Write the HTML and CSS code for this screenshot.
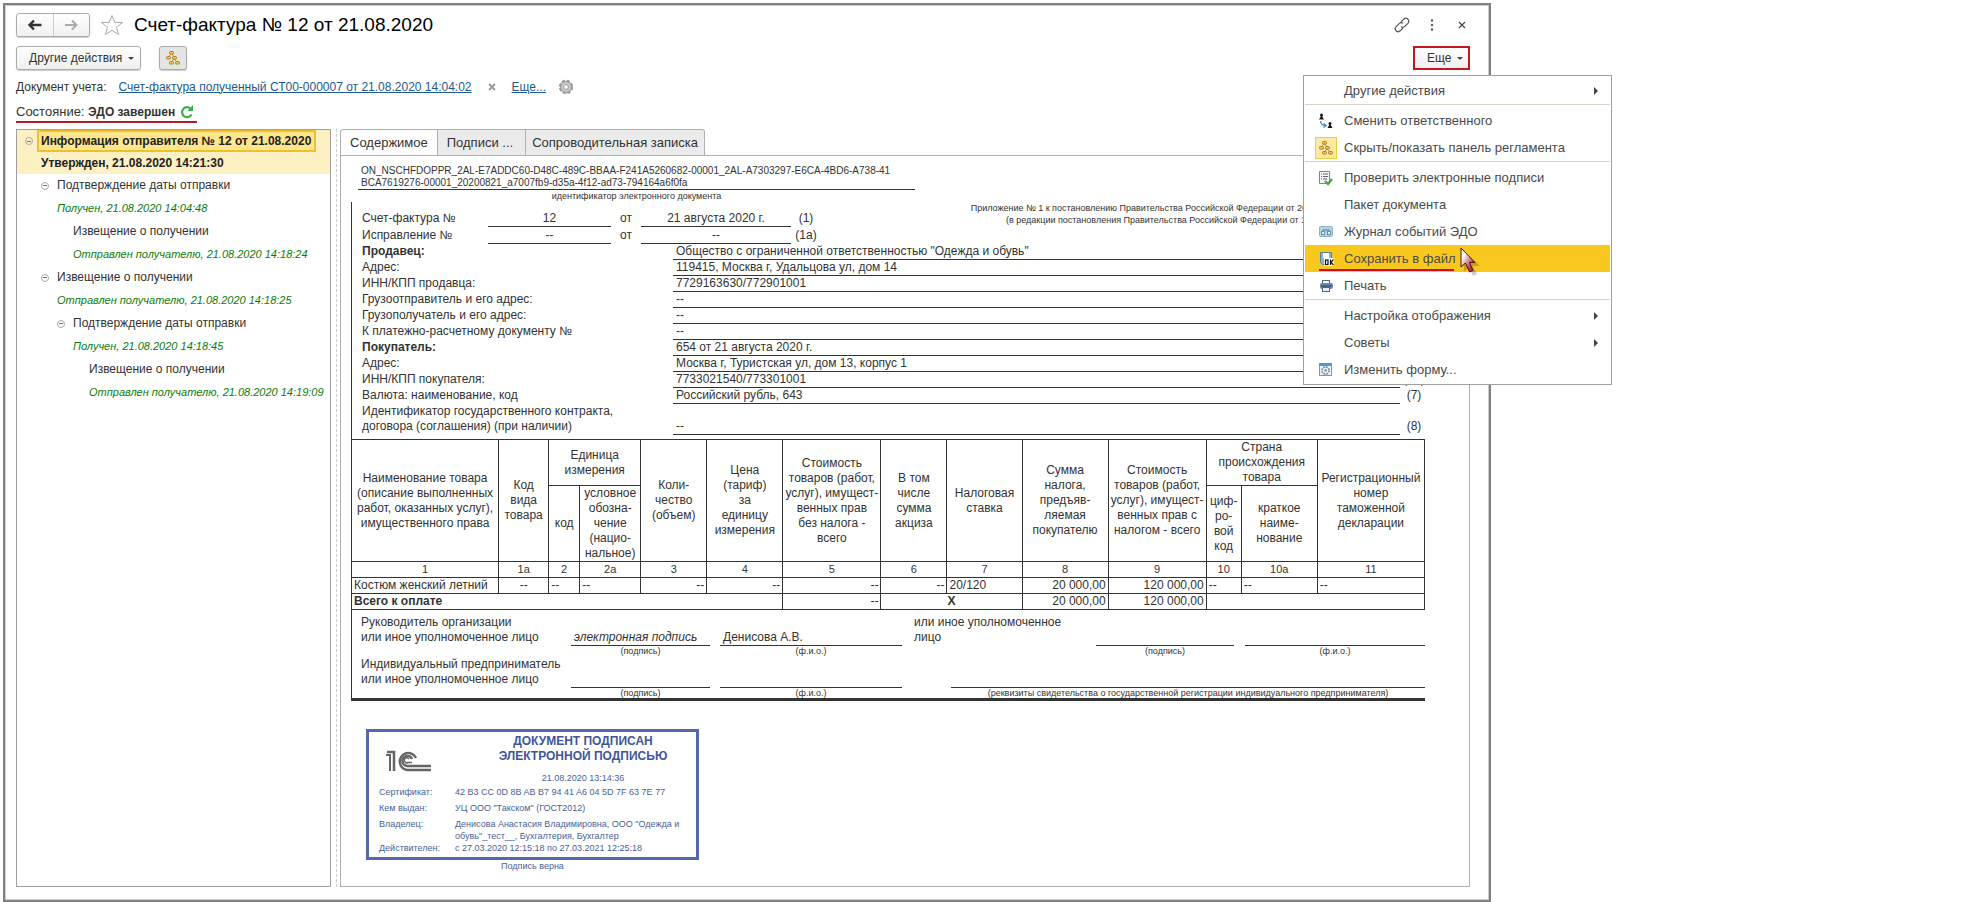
FILE: index.html
```html
<!DOCTYPE html>
<html lang="ru">
<head>
<meta charset="utf-8">
<title>Счет-фактура № 12 от 21.08.2020</title>
<link rel="stylesheet" href="styles.css">
</head>
<body>
<svg class="defs" aria-hidden="true">
  <symbol id="i-tree" viewBox="0 0 16 16">
    <path d="M6 4 L3 7 M7 4 L9 7 M9 9 L6 12 M9 9 L12 12" stroke="#b98a3c" fill="none"/>
    <g fill="#f8c860" stroke="#b07a1c"><rect x="4.500" y="1.500" width="4" height="2.500" rx="1"/><rect x="1.500" y="6.500" width="4" height="2.500" rx="1"/><rect x="7.500" y="6.500" width="4" height="2.500" rx="1"/><rect x="4.500" y="11.500" width="4" height="2.500" rx="1"/><rect x="10.500" y="11.500" width="4" height="2.500" rx="1"/></g>
  </symbol>
</svg>
<main class="page">
<section class="window">
  <header class="titlebar">
    <div class="nav">
      <button type="button" aria-label="Назад"><svg width="14" height="12" viewBox="0 0 14 12"><path d="M6 1.500 L1.500 6 L6 10.500 M2 6 H13.500" fill="none" stroke="#333" stroke-width="2.400"/></svg></button>
      <button type="button" aria-label="Вперед"><svg width="14" height="12" viewBox="0 0 14 12"><path d="M8 1.500 L12.500 6 L8 10.500 M12 6 H1" fill="none" stroke="#aaa" stroke-width="2"/></svg></button>
    </div>
    <svg class="star" width="24" height="22" viewBox="0 0 24 22"><path d="M12 1.500 L14.700 8.300 L22.500 8.600 L16.400 13.300 L18.600 20.500 L12 16.300 L5.400 20.500 L7.600 13.300 L1.500 8.600 L9.300 8.300 Z" fill="#fff" stroke="#aaa"/></svg>
    <h1>Счет-фактура № 12 от 21.08.2020</h1>
    <div class="window-tools">
      <button type="button" aria-label="Ссылка"><svg width="16" height="16" viewBox="0 0 16 16" fill="none" stroke="#555" stroke-width="1.200"><path d="M7 5 L9.800 2.200 A2.900 2.900 0 0 1 13.900 6.300 L10.800 9.400 A2.900 2.900 0 0 1 7 9.600"/><path d="M9 11 L6.200 13.800 A2.900 2.900 0 0 1 2.100 9.700 L5.200 6.600 A2.900 2.900 0 0 1 9 6.400"/></svg></button>
      <button type="button" aria-label="Меню"><svg width="4" height="12" viewBox="0 0 4 12" fill="#555"><circle cx="2" cy="1.500" r="1.200"/><circle cx="2" cy="6" r="1.200"/><circle cx="2" cy="10.500" r="1.200"/></svg></button>
      <button type="button" aria-label="Закрыть"><svg width="8" height="8" viewBox="0 0 8 8"><path d="M1 1 L7 7 M7 1 L1 7" stroke="#444" stroke-width="1.200"/></svg></button>
    </div>
  </header>

  <div class="toolbar">
    <button type="button" class="btn">Другие действия <i class="caret"></i></button>
    <button type="button" class="btn btn-icon" aria-label="Панель регламента"><svg width="16" height="16"><use href="#i-tree"/></svg></button>
    <div class="more">
      <button type="button" class="btn btn-more">Еще <i class="caret"></i></button>
      <ul class="menu" role="menu">
        <li><button type="button"><span></span>Другие действия<i class="sub"></i></button></li>
        <li class="sep"><button type="button"><span><svg width="16" height="16" viewBox="0 0 16 16"><g fill="#181818"><circle cx="3.500" cy="2" r="1.500"/><path d="M1 6.500 L3 3 H4 L6 6.500 Z"/><circle cx="12" cy="10.500" r="1.500"/><path d="M9.500 15 L11.500 11.500 H12.500 L14.500 15 Z"/></g><path d="M2.500 8 C3 11.500 4 12.500 7.500 12.500 M5.500 10.500 L8 12.500 L5.500 14.500" fill="none" stroke="#4a90c4" stroke-width="1.500"/></svg></span>Сменить ответственного</button></li>
        <li><button type="button"><span class="checked"><svg width="16" height="16"><use href="#i-tree"/></svg></span>Скрыть/показать панель регламента</button></li>
        <li class="sep"><button type="button"><span><svg width="16" height="16" viewBox="0 0 16 16"><path d="M1.500 1.500 H11.500 V13.500 H1.500 Z" fill="#f4f8fa" stroke="#71899a"/><path d="M3 4 H4 M5 4 H10 M3 6.500 H4 M5 6.500 H10 M3 9 H4 M5 9 H9" stroke="#667"/><path d="M7 11 L10 14 L14 9" fill="none" stroke="#4fa545" stroke-width="2.400"/></svg></span>Проверить электронные подписи</button></li>
        <li><button type="button"><span></span>Пакет документа</button></li>
        <li><button type="button"><span><svg width="16" height="16" viewBox="0 0 16 16"><rect x="1.500" y="2.500" width="13" height="10" rx="1" fill="#b4d3e6" stroke="#8fb0c6"/><path d="M5 6 H11 M5.500 5.500 L4 8 M10.500 5.500 L12 8" stroke="#557f9d" fill="none"/><rect x="3.500" y="7.500" width="3" height="3" fill="#e8f2f8" stroke="#6b93af"/><rect x="9.500" y="7.500" width="3" height="3" fill="#e8f2f8" stroke="#6b93af"/></svg></span>Журнал событий ЭДО</button></li>
        <li class="current"><button type="button"><span><svg width="16" height="16" viewBox="0 0 16 16"><path d="M2.500 1.500 H13.500 V13.500 H4.500 L2.500 11.500 Z" fill="#8fb4d0" stroke="#557f9d"/><rect x="5" y="2" width="6" height="5" fill="#fff"/><rect x="6" y="7" width="10" height="8" fill="#fff"/><rect x="7.500" y="9" width="2.500" height="4.500" fill="none" stroke="#111" stroke-width="1.200"/><path d="M12.500 8.500 V14 M15.500 8.500 L13 11.200 L15.500 14" fill="none" stroke="#111" stroke-width="1.200"/></svg></span><u>Сохранить в файл</u></button>
          <svg class="cursor" width="22" height="32" viewBox="0 0 22 32"><defs><linearGradient id="cur" x1="0" y1="0" x2="1" y2="1"><stop offset=".25" stop-color="#fff"/><stop offset=".75" stop-color="#b83038"/></linearGradient></defs><path d="M4 5 V25 L9 20 L13 29 L17 27 L13 19 H20 Z" fill="#000" opacity=".2"/><path d="M1 1 V20 L5.500 16 L9.500 25 L13 23.500 L9.500 15.500 H15 Z" fill="url(#cur)" stroke="#4a1418"/></svg></li>
        <li><button type="button"><span><svg width="16" height="16" viewBox="0 0 16 16"><rect x="4.500" y="2.500" width="7" height="4" fill="#fff" stroke="#4c6b86"/><rect x="2" y="5" width="13" height="6" rx="2" fill="#6a8ba8"/><path d="M3 8 H14" stroke="#263f55"/><rect x="4.500" y="9.500" width="7" height="4" fill="#e5eef5" stroke="#4c6b86"/></svg></span>Печать</button></li>
        <li class="sep"><button type="button"><span></span>Настройка отображения<i class="sub"></i></button></li>
        <li><button type="button"><span></span>Советы<i class="sub"></i></button></li>
        <li><button type="button"><span><svg width="16" height="16" viewBox="0 0 16 16"><rect x="1.500" y="1.500" width="12" height="12" fill="#eef4f8" stroke="#7d98ab"/><path d="M1 2.500 H14" stroke="#4a9ad0" stroke-width="3"/><circle cx="7.500" cy="8.500" r="3.600" fill="none" stroke="#7890a2" stroke-width="1.600" stroke-dasharray="2 .8"/><circle cx="7.500" cy="8.500" r="1.300" fill="#7890a2"/></svg></span>Изменить форму...</button></li>
      </ul>
    </div>
  </div>

  <div class="info">
    <span>Документ учета:</span>
    <a class="doc-link" href="#doc">Счет-фактура полученный СТ00-000007 от 21.08.2020 14:04:02</a>
    <svg class="clear" width="8" height="8" viewBox="0 0 8 8"><path d="M1 1 L7 7 M7 1 L1 7" stroke="#999" stroke-width="1.800"/></svg>
    <a href="#more">Еще...</a>
    <svg class="gear" width="16" height="16" viewBox="0 0 16 16"><circle cx="8" cy="8" r="6.200" fill="#d4d4d4" stroke="#999" stroke-width="2" stroke-dasharray="3.200 1.670"/><circle cx="8" cy="8" r="5.400" fill="#ccc" stroke="#999"/><circle cx="8" cy="8" r="2.400" fill="#fff" stroke="#999"/></svg>
  </div>
  <div class="state"><span>Состояние: <b>ЭДО завершен</b></span>
    <svg width="14" height="14" viewBox="0 0 14 14"><path d="M10.500 3.500 A5 5 0 1 0 11.500 9.500" fill="none" stroke="#3fae49" stroke-width="2.200"/><path d="M13 0 V6 H7.500 Z" fill="#3fae49"/></svg>
  </div>

  <div class="panels">
    <aside class="tree">
      <ul>
        <li>
          <div class="root"><div class="row l0"><i class="fold"></i><strong class="picked">Информация отправителя № 12 от 21.08.2020</strong></div>
          <div class="row l0"><strong class="approved">Утвержден, 21.08.2020 14:21:30</strong></div></div>
          <ul>
            <li><div class="row l1"><i class="fold"></i><span>Подтверждение даты отправки</span></div>
              <div class="row l1"><em>Получен, 21.08.2020 14:04:48</em></div>
              <ul><li><div class="row l2"><span>Извещение о получении</span></div>
              <div class="row l2"><em>Отправлен получателю, 21.08.2020 14:18:24</em></div></li></ul></li>
            <li><div class="row l1"><i class="fold"></i><span>Извещение о получении</span></div>
              <div class="row l1"><em>Отправлен получателю, 21.08.2020 14:18:25</em></div>
              <ul><li><div class="row l2"><i class="fold"></i><span>Подтверждение даты отправки</span></div>
              <div class="row l2"><em>Получен, 21.08.2020 14:18:45</em></div>
              <ul><li><div class="row l3"><span>Извещение о получении</span></div>
              <div class="row l3"><em>Отправлен получателю, 21.08.2020 14:19:09</em></div></li></ul></li></ul></li>
          </ul>
        </li>
      </ul>
    </aside>
    <div class="splitter"></div>
    <section class="content">
      <div class="tabs" role="tablist">
        <button type="button" role="tab" aria-selected="true">Содержимое</button>
        <button type="button" role="tab" aria-selected="false" class="tab-sign">Подписи ...</button>
        <button type="button" role="tab" aria-selected="false" class="tab-note">Сопроводительная записка</button>
      </div>
      <article class="doc">
        <div class="doc-id">ON_NSCHFDOPPR_2AL-E7ADDC60-D48C-489C-BBAA-F241A5260682-00001_2AL-A7303297-E6CA-4BD6-A738-41<br>BCA7619276-00001_20200821_a7007fb9-d35a-4f12-ad73-794164a6f0fa</div>
        <div class="doc-id-note">идентификатор электронного документа</div>
        <div class="frame">
          <div class="head">
            <div class="numbers">
              <span>Счет-фактура №</span><span class="line">12</span><span class="mid">от</span><span class="line">21 августа 2020 г.</span><span class="mid">(1)</span>
              <span>Исправление №</span><span class="line">--</span><span class="mid">от</span><span class="line">--</span><span class="mid">(1а)</span>
            </div>
            <p class="appendix">Приложение № 1 к постановлению Правительства Российской Федерации от 26 декабря 2011 г. № 1137<br>(в редакции постановления Правительства Российской Федерации от 19 августа 2017 г. № 981)</p>
          </div>
          <div class="fields">
            <b>Продавец:</b><span class="line">Общество с ограниченной ответственностью "Одежда и обувь"</span><span class="mid">(2)</span>
            <span>Адрес:</span><span class="line">119415, Москва г, Удальцова ул, дом 14</span><span class="mid">(2а)</span>
            <span>ИНН/КПП продавца:</span><span class="line">7729163630/772901001</span><span class="mid">(2б)</span>
            <span>Грузоотправитель и его адрес:</span><span class="line">--</span><span class="mid">(3)</span>
            <span>Грузополучатель и его адрес:</span><span class="line">--</span><span class="mid">(4)</span>
            <span>К платежно-расчетному документу №</span><span class="line">--</span><span class="mid">(5)</span>
            <b>Покупатель:</b><span class="line">654 от 21 августа 2020 г.</span><span class="mid">(6)</span>
            <span>Адрес:</span><span class="line">Москва г, Туристская ул, дом 13, корпус 1</span><span class="mid">(6а)</span>
            <span>ИНН/КПП покупателя:</span><span class="line">7733021540/773301001</span><span class="mid">(6б)</span>
            <span>Валюта: наименование, код</span><span class="line">Российский рубль, 643</span><span class="mid">(7)</span>
            <span>Идентификатор государственного контракта,<br>договора (соглашения) (при наличии)</span><span class="line low">--</span><span class="mid low">(8)</span>
          </div>
          <table class="goods">
            <colgroup><col class="w147"><col class="w50"><col class="w31"><col class="w61"><col class="w66"><col class="w76"><col class="w98"><col class="w66"><col class="w75"><col class="w86"><col class="w98"><col class="w35"><col class="w76"><col class="w107"></colgroup>
            <thead>
              <tr class="h1">
                <th rowspan="2">Наименование товара<br>(описание выполненных<br>работ, оказанных услуг),<br>имущественного права</th>
                <th rowspan="2">Код<br>вида<br>товара</th>
                <th colspan="2">Единица<br>измерения</th>
                <th rowspan="2">Коли-<br>чество<br>(объем)</th>
                <th rowspan="2">Цена<br>(тариф)<br>за<br>единицу<br>измерения</th>
                <th rowspan="2">Стоимость<br>товаров (работ,<br>услуг), имущест-<br>венных прав<br>без налога -<br>всего</th>
                <th rowspan="2">В том<br>числе<br>сумма<br>акциза</th>
                <th rowspan="2">Налоговая<br>ставка</th>
                <th rowspan="2">Сумма<br>налога,<br>предъяв-<br>ляемая<br>покупателю</th>
                <th rowspan="2">Стоимость<br>товаров (работ,<br>услуг), имущест-<br>венных прав с<br>налогом - всего</th>
                <th colspan="2">Страна<br>происхождения<br>товара</th>
                <th rowspan="2">Регистрационный<br>номер<br>таможенной<br>декларации</th>
              </tr>
              <tr class="h2"><th>код</th><th>условное<br>обозна-<br>чение<br>(нацио-<br>нальное)</th><th>циф-<br>ро-<br>вой<br>код</th><th>краткое<br>наиме-<br>нование</th></tr>
              <tr class="nums"><th>1</th><th>1а</th><th>2</th><th>2а</th><th>3</th><th>4</th><th>5</th><th>6</th><th>7</th><th>8</th><th>9</th><th>10</th><th>10а</th><th>11</th></tr>
            </thead>
            <tbody>
              <tr><td>Костюм женский летний</td><td class="c">--</td><td>--</td><td>--</td><td class="r">--</td><td class="r">--</td><td class="r">--</td><td class="r">--</td><td>20/120</td><td class="r">20 000,00</td><td class="r">120 000,00</td><td>--</td><td>--</td><td>--</td></tr>
              <tr><td colspan="6"><b>Всего к оплате</b></td><td class="r">--</td><td colspan="2" class="c"><b>Х</b></td><td class="r">20 000,00</td><td class="r">120 000,00</td><td colspan="3"></td></tr>
            </tbody>
          </table>
          <div class="signs">
            <span class="who">Руководитель организации<br>или иное уполномоченное лицо</span>
            <span class="line s1"><em>электронная подпись</em></span><span class="line s2">Денисова А.В.</span>
            <span class="s3">или иное уполномоченное<br>лицо</span>
            <span class="line s4"></span><span class="line s5"></span>
            <small class="s1">(подпись)</small><small class="s2">(ф.и.о.)</small><small class="s4">(подпись)</small><small class="s5">(ф.и.о.)</small>
            <span class="who">Индивидуальный предприниматель<br>или иное уполномоченное лицо</span>
            <span class="line s1"></span><span class="line s2"></span><span class="line wide"></span>
            <small class="s1">(подпись)</small><small class="s2">(ф.и.о.)</small><small class="wide">(реквизиты свидетельства о государственной регистрации индивидуального предпринимателя)</small>
          </div>
        </div>
        <div class="stamp-wrap">
          <div class="stamp">
            <svg class="logo" width="46" height="22" viewBox="0 0 46 22" fill="none" stroke="#666"><path d="M0 5 H4 V21" stroke-width="2"/><path d="M1 2 H8 V21" stroke-width="2.500"/><path d="M30 8 A8.500 8.500 0 1 0 21.500 20 H45" stroke-width="2.500"/><path d="M26 9 A5 5 0 1 0 21.500 16 H45" stroke-width="2.500"/><path d="M23 9 A2.500 2.500 0 1 0 22 12.500 H26" stroke-width="1.500"/></svg>
            <h2>ДОКУМЕНТ ПОДПИСАН<br>ЭЛЕКТРОННОЙ ПОДПИСЬЮ</h2>
            <time>21.08.2020 13:14:36</time>
            <dl>
              <dt>Сертификат:</dt><dd>42 B3 CC 0D 8B AB B7 94 41 A6 04 5D 7F 63 7E 77</dd>
              <dt>Кем выдан:</dt><dd>УЦ ООО "Такском" (ГОСТ2012)</dd>
              <dt>Владелец:</dt><dd class="owner">Денисова Анастасия Владимировна, ООО "Одежда и<br>обувь"_тест__, Бухгалтерия, Бухгалтер</dd>
              <dt>Действителен:</dt><dd>с 27.03.2020 12:15:18 по 27.03.2021 12:25:18</dd>
            </dl>
          </div>
          <p>Подпись верна</p>
        </div>
      </article>
    </section>
  </div>
</section>
</main>
</body>
</html>
```
FILE: styles.css
```css
* { box-sizing: border-box; }
body {
  margin: 0;
  background: #fff;
  color: #333;
  font: 12px/15px "Liberation Sans", Arial, sans-serif;
}
ul, dl, dd, p, h1, h2 { margin: 0; padding: 0; list-style: none; }
button { font: inherit; color: inherit; cursor: pointer; }
a { color: #1d5a8c; }
svg { display: block; flex: none; }
.defs { position: absolute; width: 0; height: 0; }

.page { min-height: 100vh; display: flex; padding: 3px 481px 0 3px; }
.window {
  flex: 1;
  min-width: 0;
  display: flex;
  flex-direction: column;
  padding: 8px 19px 13px 11px;
  border: 2px solid #808080;
  box-shadow: inset 0 0 0 1px #ccc;
}

.titlebar { display: flex; align-items: center; height: 24px; }
.nav { display: flex; width: 74px; height: 24px; border: 1px solid #aaa; border-radius: 3px; box-shadow: 0 1px 1px #ccc; }
.nav button { flex: 1; display: flex; align-items: center; justify-content: center; border: 0; padding: 0; background: linear-gradient(#fff, #f0f0f0); border-radius: 3px; }
.nav button + button { border-left: 1px solid #ccc; border-radius: 0 3px 3px 0; }
.star { margin: 0 10px; }
h1 { font-size: 19px; line-height: 24px; font-weight: 400; color: #000; white-space: nowrap; }
.window-tools { margin-left: auto; display: flex; align-items: center; gap: 14px; }
.window-tools button { display: flex; justify-content: center; width: 16px; border: 0; padding: 0; background: none; }

.toolbar { display: flex; align-items: center; margin-top: 9px; gap: 18px; }
.btn {
  display: flex; align-items: center; gap: 6px; height: 24px; padding: 0 6px 0 12px;
  border: 1px solid #aaa; border-radius: 3px; background: linear-gradient(#fff, #efefef); box-shadow: 0 1px 1px #ccc;
  white-space: nowrap;
}
.btn-icon { padding: 0; width: 28px; justify-content: center; background: #e4e4e4; }
.caret { border: 3px solid transparent; border-top-color: #444; border-bottom: 0; }
.more { position: relative; margin-left: auto; }
.btn-more { width: 57px; padding: 0 0 0 12px; border: 2px solid #c0181e; border-radius: 0; box-shadow: none; }

.menu {
  position: absolute; z-index: 2; top: 29px; right: -142px; width: 309px;
  padding: 1px; border: 1px solid #a0a0a0; background: #fff; font-size: 13px; color: #4a4a4a;
}
.menu li { position: relative; }
.menu button { display: flex; align-items: center; width: 100%; height: 27px; padding: 0 12px 0 10px; border: 0; background: none; text-align: left; white-space: nowrap; }
.menu span { display: flex; align-items: center; justify-content: center; width: 22px; height: 22px; margin-right: 7px; }
.menu .checked { background: #fbe9a6; border: 1px solid #eccb3c; }
.menu .sep { border-top: 1px solid #d5d5c8; padding-top: 2px; }
.menu .current { background: #f9c81e; }
.menu u { text-decoration: none; }
.menu .current::after { content: ""; position: absolute; left: 14px; bottom: 1px; width: 135px; height: 2px; background: #d00c0c; }
.cursor { position: absolute; z-index: 1; left: 155px; top: 2px; }
.sub { margin-left: auto; border: 4px solid transparent; border-left-color: #444; border-right: 0; }

.info { display: flex; align-items: center; margin-top: 9px; height: 16px; white-space: nowrap; }
.doc-link { margin-left: 12px; }
.clear { margin: 0 16px; }
.gear { margin-left: 12px; }
.state { align-self: flex-start; display: flex; align-items: center; gap: 5px; margin-top: 9px; height: 19px; padding: 0 3px 2px 0; border-bottom: 2px solid #b01c28; font-size: 13px; white-space: nowrap; }
.state b { font-size: 12px; }

.panels { flex: 1; display: flex; margin-top: 6px; }
.tree { flex: none; width: 315px; border: 1px solid #a0a0a0; }
.root { background: #fdf0c2; }
.row { position: relative; display: flex; align-items: center; height: 23px; white-space: nowrap; }
.root .row { height: 22px; }
.fold { position: absolute; width: 8px; height: 8px; border: 1px solid #aaa; border-radius: 50%; background: linear-gradient(#777, #777) center / 4px 1px no-repeat; }
.l0 { padding-left: 20px; }
.l1 { padding-left: 40px; }
.l2 { padding-left: 56px; }
.l3 { padding-left: 72px; }
.l0 .fold { left: 8px; }
.l1 .fold { left: 24px; }
.l2 .fold { left: 40px; }
.row strong { color: #222; }
.row em { font-size: 11px; color: #0a7d0a; }
.picked { height: 22px; line-height: 18px; padding: 0 3px 0 2px; border: 2px solid #efc02c; background: #fde68c; }
.approved { padding-left: 4px; }
.splitter { flex: none; width: 9px; background: repeating-linear-gradient(#ccc 0 3px, transparent 3px 5px) 5px 0 / 1px 100% no-repeat; }

.content { flex: 1; min-width: 0; display: flex; flex-direction: column; }
.tabs { display: flex; height: 27px; margin-bottom: -1px; }
.tabs button { padding: 0 9px; border: 1px solid #b0b0b0; background: #ebebeb; font-size: 13px; white-space: nowrap; }
.tabs button + button { border-left: 0; }
.tabs button:first-child { border-radius: 3px 0 0 0; }
.tabs button:last-child { border-radius: 0 3px 0 0; }
.tabs .tab-sign { padding-right: 12px; }
.tabs .tab-note { padding: 0 6px; }
.tabs [aria-selected="true"] { background: #fff; border-bottom-color: #fff; }

.doc { flex: 1; padding: 9px 44px 0 10px; border: 1px solid #b0b0b0; }
.doc-id { width: 557px; margin-left: 7px; padding-left: 3px; border-bottom: 1px solid #333; font-size: 10px; line-height: 12px; white-space: nowrap; }
.doc-id-note { width: 557px; margin-left: 7px; text-align: center; font-size: 9px; line-height: 12px; }
.frame { border-left: 1px solid #333; border-bottom: 3px solid #333; }
.head { display: flex; justify-content: space-between; padding: 0 18px 0 10px; }
.numbers { display: grid; grid-template-columns: 126px 123px 30px 150px 30px; grid-auto-rows: 17px; padding-top: 8px; line-height: 16px; }
.numbers .line, .mid { text-align: center; }
.line { border-bottom: 1px solid #333; }
.appendix { flex: none; font-size: 9px; line-height: 12px; text-align: right; }
.fields { display: grid; grid-template-columns: 311px 1fr 25px; grid-auto-rows: minmax(16px, auto); padding-left: 10px; }
.fields .low { padding-top: 15px; }
.fields .line { padding-left: 3px; }
.fields .mid { padding-left: 3px; }

.goods { width: calc(100% + 1px); margin: 4px 0 0 -1px; border-collapse: collapse; table-layout: fixed; }
.goods th, .goods td { padding: 0; border: 1px solid #333; font-weight: 400; line-height: 15px; white-space: nowrap; }
.goods td { padding: 0 2px; }
.h1 { height: 46px; }
.h2 { height: 76px; }
.nums th { font-size: 11px; }
.c { text-align: center; }
.goods .c { text-align: center; }
.goods .r { text-align: right; }
.w147 { width: 147px; } .w50 { width: 50px; } .w31 { width: 31px; } .w61 { width: 61px; }
.w66 { width: 66px; } .w76 { width: 76px; } .w98 { width: 98px; } .w75 { width: 75px; }
.w86 { width: 86px; } .w35 { width: 35px; } .w107 { width: 107px; }

.signs { display: grid; grid-template-columns: 210px 139px 10px 182px 12px 37px 145px 138px 11px 1fr; padding: 5px 0 0 9px; margin-bottom: -1px; }
.signs .line { padding-left: 3px; padding-top: 15px; height: 31px; }
.signs small { font-size: 9px; line-height: 11px; text-align: center; }
.who { grid-column: 1; white-space: nowrap; }
.s1 { grid-column: 2; }
.s2 { grid-column: 4; }
.s3 { grid-column: 6 / 8; }
.s4 { grid-column: 8; }
.s5 { grid-column: 10; }
.wide { grid-column: 7 / 11; }

.stamp-wrap { width: 333px; margin: 28px 0 0 15px; color: #4a5f96; font-size: 9px; line-height: 12px; }
.stamp { display: grid; grid-template-columns: 99px 1fr; padding: 2px 8px 3px 10px; border: 3px solid #5668ab; }
.logo { grid-row: 1 / 3; margin: 16px 0 0 7px; }
.stamp h2 { justify-self: center; font-size: 12px; line-height: 15px; text-align: center; color: #42559c; }
.stamp time { justify-self: center; margin: 8px 0 2px; }
.stamp dl { grid-column: 1 / 3; display: grid; grid-template-columns: 76px 1fr; white-space: nowrap; }
.stamp dt, .stamp dd { padding-bottom: 4px; }
.stamp .owner { padding-bottom: 0; }
.stamp dt:last-of-type, .stamp dd:last-of-type { padding-bottom: 0; }
.stamp-wrap p { text-align: center; }
```
